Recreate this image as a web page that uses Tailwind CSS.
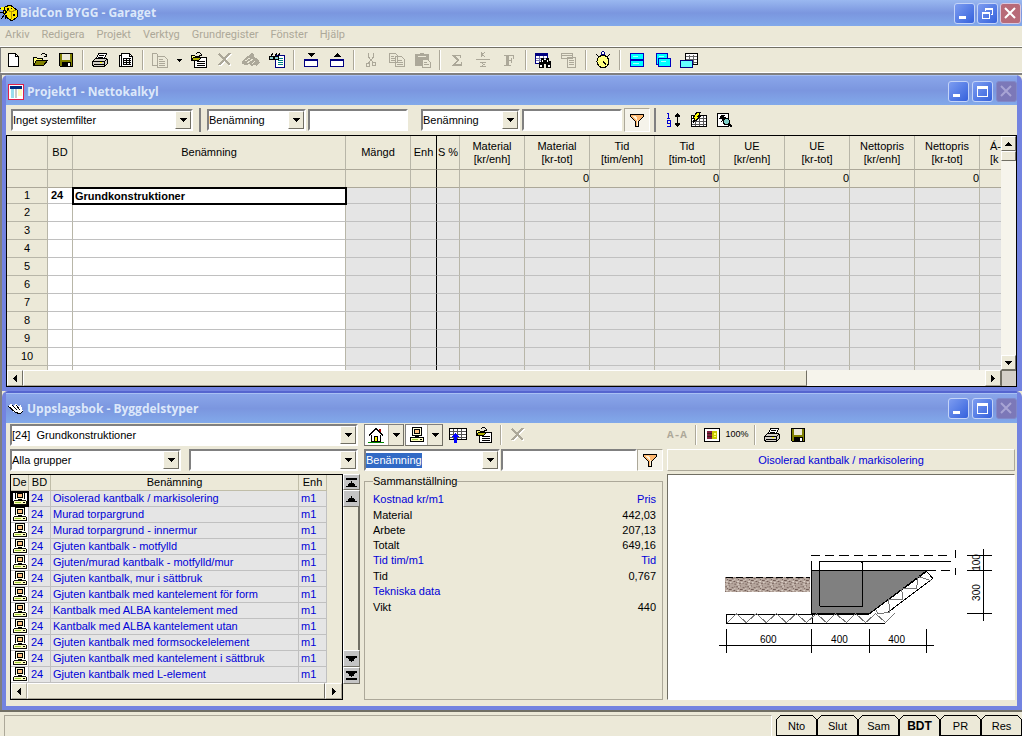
<!DOCTYPE html>
<html lang="sv">
<head>
    <meta charset="UTF-8">
    <meta name="viewport" content="width=device-width, initial-scale=1.0">
    <title>BidCon BYGG - Garaget</title>
    <script src="https://cdn.jsdelivr.net/npm/@tailwindcss/browser@4"></script>
</head>
<body class="bg-[#ece9d8] font-['Liberation_Sans',Arial,sans-serif] text-[11px] text-black [shape-rendering:crispEdges]">

    <!-- icon sprite -->
    <svg class="hidden">
        <symbol id="down" viewBox="0 0 7 4"><path d="M0 0h7v1H6v1H5v1H4v1H3V3H2V2H1V1H0z"/></symbol>
        <symbol id="up" viewBox="0 0 7 4"><path d="M0 4h7V3H6V2H5V1H4V0H3v1H2v1H1v1H0z"/></symbol>
        <symbol id="left" viewBox="0 0 4 7"><path d="M4 0v7H3V6H2V5H1V4H0V3h1V2h1V1h1V0z"/></symbol>
        <symbol id="right" viewBox="0 0 4 7"><path d="M0 0v7h1V6h1V5h1V4h1V3H3V2H2V1H1V0z"/></symbol>
        <symbol id="new" viewBox="0 0 16 16"><path d="M2.500 1.500h7l3 3v10h-10z" fill="#fff" stroke="#000"/><path d="M9.500 1.500v3h3" fill="none" stroke="#000"/></symbol>
        <symbol id="open" viewBox="0 0 16 16"><path d="M1.500 13.500v-8h3l1 1h5v2" fill="#ffff80" stroke="#000"/><path d="M1.500 13.500l3-5h11l-4 5z" fill="#808000" stroke="#000"/><path d="M9 2.500h1M10 1.500h3M13 2.500h1M14.500 2v3M12 4.500h3" fill="none" stroke="#000"/></symbol>
        <symbol id="save" viewBox="0 0 16 16"><path d="M1.500 1.500h13v13h-12l-1-1z" fill="#808000" stroke="#000"/><path d="M4 2h8v6H4z" fill="#ece9d8"/><path d="M4 10h9v4H4z"/><path d="M10 11h2v3h-2z" fill="#fff"/></symbol>
        <symbol id="print" viewBox="0 0 16 16"><path d="M4.500 6.500l2-5h8l-2 5" fill="#fff" stroke="#000"/><path d="M7 3.500h5M6 5.500h5" stroke="#000"/><path d="M.5 9.500l3-3h10l2 1v4l-3 3h-10l-2-1z" fill="#d4d0c8" stroke="#000"/><path d="M1 9.500h11v4M12 9.500l3-2M2 12.500h10" fill="none" stroke="#000"/><path d="M8 10h2v1H8z" fill="#ff0"/></symbol>
        <symbol id="sheet" viewBox="0 0 16 16"><path d="M1.500 3.500h10v11h-10z" fill="#fff" stroke="#000"/><path d="M3.500 1.500h8l3 3v10h-11z" fill="#fff" stroke="#000"/><path d="M11.500 1.500v3h3M5 6.500h8M5 8.500h8M5 10.500h8M5 12.500h8M5.500 6v7M8.500 6v7M11.500 6v7" fill="none" stroke="#000"/></symbol>
        <symbol id="docs" viewBox="0 0 16 16"><path d="M6 13.500H.5v-12h4l1 1v2M5.500 4.500h7l3 3v8h-10z" fill="#ece9d8" stroke="#aca899"/><path d="M7 7.500h4M7 9.500h6M7 11.500h6M7 13.500h6" stroke="#aca899"/></symbol>
        <symbol id="folderdoc" viewBox="0 0 16 16"><path d="M3.500 5.500h12v10h-12z" fill="#fff" stroke="#000"/><path d="M6 9.500h8M6 11.500h8M6 13.500h8" stroke="#000"/><path d="M.5 8.500v-5h3l1 1h4v2" fill="#ffff80" stroke="#000"/><path d="M.5 8.500l2-3h8l-3 3z" fill="#b0b000" stroke="#000"/><path d="M5 1.500h1M6 .5h3M9 1.500h1M10.500 2v2M8 3.500h3" fill="none" stroke="#000"/></symbol>
        <symbol id="del" viewBox="0 0 16 16"><path d="M3 3l11 11M14 2L3 14" stroke="#fff" stroke-width="2"/><path d="M2 2l11 11M13 1L2 13" stroke="#aca899" stroke-width="2"/></symbol>
        <symbol id="hand" viewBox="0 0 18 16"><path d="M0 9l6-5 3-3 3 1v3l4 2 2 4-2 1-1 2-3-1-2 1-3-2-3 1-4-1z" fill="#aca899"/><path d="M3 9l5-3M5 11l6-4M10 12l3-3" stroke="#ece9d8"/></symbol>
        <symbol id="finddoc" viewBox="0 0 16 16"><path d="M6.500 3.500h9v12h-9z" fill="#fff" stroke="#000080"/><path d="M9 6.500h5M9 8.500h5M9 10.500h5M9 12.500h5" stroke="#008080"/><path d="M1.500 7.500v-2l2-4M5.500 7.500v-2l2-4M8.500 7.500v-2l2-4" fill="none" stroke="#000"/><circle cx="2.500" cy="6" r="2" fill="#8cc" stroke="#000"/><circle cx="7.500" cy="6" r="2" fill="#8cc" stroke="#000"/></symbol>
        <symbol id="boxdown" viewBox="0 0 16 16"><path d="M5 1h7v1h-1v1h-1v1H9v1H8V4H7V3H6V2H5z"/><path d="M1.500 7.500h13v7h-13z" fill="#fff" stroke="#000080"/><path d="M1 7h14v2H1z" fill="#000080"/></symbol>
        <symbol id="boxup" viewBox="0 0 16 16"><path d="M8 1h1v1h1v1h1v1h1v1H5V4h1V3h1V2h1z"/><path d="M1.500 7.500h13v7h-13z" fill="#fff" stroke="#000080"/><path d="M1 7h14v2H1z" fill="#000080"/></symbol>
        <symbol id="cut" viewBox="0 0 16 16"><path d="M5.500 1v4l5 6M10.500 1v4l-5 6" fill="none" stroke="#aca899"/><path d="M3.500 11.500h3v3h-3zM9.500 10.500h3v3h-3z" fill="none" stroke="#aca899"/></symbol>
        <symbol id="copy" viewBox="0 0 16 16"><path d="M.5 1.500h6l2 2v7h-8zM6.500 4.500h6l3 3v7h-9z" fill="#ece9d8" stroke="#aca899"/><path d="M2 4.500h3M2 6.500h4M2 8.500h4M8 8.500h5M8 10.500h6M8 12.500h6" stroke="#aca899"/></symbol>
        <symbol id="paste" viewBox="0 0 16 16"><path d="M0 2h5V1h4v1h5v12H0z" fill="#aca899"/><path d="M3 4.500h8" stroke="#ece9d8"/><path d="M7.500 7.500h5l3 3v5h-8z" fill="#ece9d8" stroke="#aca899"/><path d="M9 10.500h3M9 12.500h5" stroke="#aca899"/></symbol>
        <symbol id="sigma" viewBox="0 0 16 16"><path d="M3 3h9v3h-1V4H6l4 4-4 4h6v-2h1v4H3v-1l5-5-5-4z" fill="#aca899"/></symbol>
        <symbol id="ksigma" viewBox="0 0 16 16"><path d="M6.500 0v5M10 0L7 2.500 10 5M1 7.500h14M11 10.500H6l3 2-3 2h5" fill="none" stroke="#aca899"/></symbol>
        <symbol id="bold" viewBox="0 0 16 16"><path d="M3 3h10v4h-1V5l-1-1H8v4h2V6h1v5h-1V9H8v4h2v1H3v-1h2V4H3z" fill="#aca899"/></symbol>
        <symbol id="findtab" viewBox="0 0 16 16"><path d="M.5 1.500h12v10H.5z" fill="#fff" stroke="#000080"/><path d="M0 1h13v3H0z" fill="#000080"/><path d="M1 6.500h11M1 8.500h11M4.500 4v7M8.500 4v7" stroke="#7777b0"/><path d="M6 6h3v2h2V6h3v3h2v7h-5v-4H9v4H4v-6h2z"/><path d="M5 13h2v2H5zM13 13h2v2h-2zM7 8h1v2H7zM12 8h1v2h-1z" fill="#fff"/></symbol>
        <symbol id="tabdoc" viewBox="0 0 16 16"><path d="M.5 1.500h11v5H.5zM6.500 5.500h8v10h-8z" fill="#ece9d8" stroke="#aca899"/><path d="M1 3.500h10M8 8.500h5M8 10.500h5M8 12.500h5" stroke="#aca899"/></symbol>
        <symbol id="clock" viewBox="0 0 16 18"><circle cx="8" cy="10.500" r="6" fill="#ffff80" stroke="#000"/><path d="M8 10.500l3 3M1 3l3 3M15 3l-3 3" stroke="#000"/><path d="M6.500 3.500v-2l1-1h1l1 1v2z" fill="#fff" stroke="#000080"/></symbol>
        <symbol id="tile" viewBox="0 0 16 16"><path d="M1.500 1.500h13v13h-13z" fill="#0ff" stroke="#0000c0"/><path d="M1 8h14" stroke="#0000c0" stroke-width="2"/><path d="M4 4.500h5M4 11.500h6" stroke="#aff"/></symbol>
        <symbol id="cascade" viewBox="0 0 16 16"><path d="M1.500 1.500h11v11h-11z" fill="#0ff" stroke="#0000c0"/><path d="M3.500 6.500h12v8h-12z" fill="#0ff" stroke="#0000c0"/><path d="M4 4.500h5M6 9.500h5" stroke="#aff"/></symbol>
        <symbol id="tabwin" viewBox="0 0 18 16"><path d="M5.500 1.500h12v11h-12z" fill="#fff" stroke="#000"/><path d="M6 4.500h11M6 7.500h11M6 10.500h11M9.500 3v9M13.500 3v9" stroke="#666"/><path d="M.5 8.500h12v7H.5z" fill="#6ff" stroke="#000080"/></symbol>
        <symbol id="filter" viewBox="0 0 16 16"><path d="M1.500 2.500h13v2l-5 5v5h-3v-5l-5-5z" fill="#ffb870" stroke="#000"/><path d="M3 4h4l2 5v5H8V9z" fill="#fff3d8"/></symbol>
        <symbol id="sort" viewBox="0 0 16 16"><path d="M2 1.500h2M3.500 1v6M2 6.500h3M2.500 9v3M5.500 9v6M2 8.500h4M2 11.500h4M2 14.500h3" fill="none" stroke="#0000d0"/><path d="M12 1h1v1h1v1h1v2h-2v6h2v2h-1v1h-1v1h-1v-1h-1v-1h-1v-2h2V5h-2V3h1V2h1z"/></symbol>
        <symbol id="flashtab" viewBox="0 0 18 16"><path d="M1.500 3.500h15v11h-15z" fill="#fff" stroke="#000"/><path d="M2 6.500h14M2 9.500h14M2 12.500h14M5.500 4v10M9.500 4v10M13.500 4v10" stroke="#555"/><path d="M7 0h4L8 4h3l-8 7 2-5H3z" fill="#ff0" stroke="#000"/></symbol>
        <symbol id="preview" viewBox="0 0 16 16"><path d="M.5 1.500h11v13H.5z" fill="#fff" stroke="#000"/><path d="M4 3h4L7 5h2l-5 6 1-4H2z"/><circle cx="9.500" cy="9.500" r="3" fill="#7fd0c8" stroke="#000"/><path d="M12 12l3 3" stroke="#000" stroke-width="2"/></symbol>
        <symbol id="house" viewBox="0 0 16 16"><path d="M3 8h10v6H3z" fill="#fff"/><path d="M11 2h2v4h-2z" fill="#a00"/><path d="M1 8.500L8 2l7 6.500M3.500 8v6.500h9V8" fill="none" stroke="#000" stroke-width="1.500"/><path d="M6.500 9.500h3v5h-3z" fill="#ff0" stroke="#000"/><path d="M0 15.500h16" stroke="#080"/></symbol>
        <symbol id="pc" viewBox="0 0 16 16"><path d="M3 0h10v9H3z"/><path d="M4 1h8v7H4z" fill="#ffd"/><path d="M5 2h6v5H5z"/><path d="M6 3h4v3H6z" fill="#ffc080"/><path d="M6 9h4v2H6z"/><path d="M1.500 10.500h13v4h-13z" fill="#ffffc0" stroke="#000"/><path d="M3 12h6v1H3z" fill="#9c3"/><path d="M11 12h2v1h-2z"/></symbol>
        <symbol id="tabup" viewBox="0 0 18 16"><path d="M.5 1.500h17v11H.5z" fill="#fff" stroke="#000"/><path d="M1 4.500h16M1 7.500h16M1 10.500h16M4.500 2v10M8.500 2v10M12.500 2v10" stroke="#555"/><path d="M6 6h1v1h1v1h1v1h1v1H8v6H5v-6H3V9h1V8h1V7h1z" fill="#00f"/></symbol>
        <symbol id="picture" viewBox="0 0 16 16"><path d="M.5 1.500h15v13H.5z" fill="#fff" stroke="#000"/><path d="M3 4h5v8H3z" fill="#802040"/><path d="M3 6.500h5M3 9.500h5" stroke="#402020"/><path d="M8 4h5v8H8z" fill="#c8c800"/><path d="M10 6h2v2h-2zM10 9h2v1h-2z" fill="#ff6"/></symbol>
        <symbol id="app" viewBox="0 0 18 18"><path d="M5 3l5-2 7 5v7l-5 4-6-4-3-5z" fill="#ffe800" stroke="#000"/><path d="M7 5l4 3 5-2M11 8v7" fill="none" stroke="#b89800"/><path d="M7 4h2v2H7zM11 4h1v1h-1zM13 10h2v2h-2z"/><path d="M0 4h4l2 5M0 8l6 2M1 15l7-9M5 15l2-4" stroke="#000" fill="none"/><path d="M1 3h3v3H1z" fill="#ff0"/></symbol>
        <symbol id="book" viewBox="0 0 16 14"><path d="M0 4l3-2 2 2 3-2 2 2 3-1 2 6-3 3-8-3z" fill="#fff"/><path d="M0 4l7 6 5 2 3-3M4 3l5 5M8 3l4 5" stroke="#000" fill="none"/></symbol>
        <symbol id="calc" viewBox="0 0 16 16"><path d="M.5.5h15v15H.5z" fill="#fff" stroke="#e0204a"/><path d="M2 2h12v3H2z" fill="#002a80"/><path d="M3 5h3v9H3z" fill="#9de"/><path d="M7 5h2v9H7z" fill="#c8c8c8"/><path d="M10 5h4v7h-4z" fill="#fffbc0"/></symbol>
        <symbol id="min" viewBox="0 0 19 19"><path d="M4 12h7v3H4z" fill="#fff"/></symbol>
        <symbol id="max" viewBox="0 0 19 19"><path d="M4 4h11v11H4zM5 7v7h9V7z" fill="#fff" fill-rule="evenodd"/></symbol>
        <symbol id="restore" viewBox="0 0 19 19"><path d="M7 4h8v7h-2v-1h1V6H8v1H7zM4 8h8v7H4zM5 10v4h6v-4z" fill="#fff" fill-rule="evenodd"/></symbol>
        <symbol id="close" viewBox="0 0 19 19"><path d="M4 4l10 10M14 4L4 14" stroke="currentColor" stroke-width="2" shape-rendering="auto"/></symbol>
    </svg>

    <div class="flex min-h-screen flex-col">

        <!-- main title bar -->
        <header class="flex h-[26px] shrink-0 items-center gap-0.5 bg-linear-to-b from-[#9ab8f0] via-[#7b96df] to-[#82a9ea] pr-px">
            <svg class="size-[18px]"><use href="#app"/></svg>
            <h1 class="flex-1 font-['Open_Sans',sans-serif] text-[12px] font-bold text-[#dce8fa]">BidCon BYGG - Garaget</h1>
            <div class="flex gap-0.5" data-buttons="restore"></div>
        </header>

        <nav class="flex h-[21px] shrink-0 items-center gap-3 border-b border-white pb-px pl-[5px] font-[Roboto,sans-serif] text-[#aca899]">
            <a href="#">Arkiv</a><a href="#">Redigera</a><a href="#">Projekt</a><a href="#">Verktyg</a><a href="#">Grundregister</a><a href="#">Fönster</a><a href="#">Hjälp</a>
        </nav>

        <div id="toolbar" class="flex h-[26px] shrink-0 items-center border-b border-l border-t border-b-white border-l-[#808080] border-t-[#716f64]"></div>

        <main class="flex flex-1 flex-col border-l-2 border-t-2 border-[#808080]">

            <!-- calculation window -->
            <section class="flex flex-col rounded-t-md border-b-4 border-l-4 border-r-5 border-[#7383e0] bg-[#ece9d8]">
                <div class="flex h-[30px] items-center gap-0.5 border-t border-[#a8c0f4] bg-linear-to-b from-[#8aa6ea] via-[#7b96df] to-[#82a9ea] pl-0.5 pt-0.5">
                    <svg class="size-4"><use href="#calc"/></svg>
                    <h2 class="flex-1 pl-px font-['Open_Sans',sans-serif] text-[12px] font-bold text-[#dce8fa]">Projekt1 - Nettokalkyl</h2>
                    <div class="flex gap-[3px]" data-buttons="max"></div>
                </div>
                <div class="flex h-[30px] items-center pl-[5px]">
                    <div class="w-[182px]" data-select="Inget systemfilter"></div>
                    <div class="ml-1.5 mr-1.5 h-6 w-0.5 bg-[#808080]"></div>
                    <div class="w-[99px]" data-select="Benämning"></div>
                    <input aria-label="Filtertext 1" class="ml-0.5 h-[22px] w-[100px] border-2 border-b-white border-l-[#808080] border-r-white border-t-[#808080] bg-white px-0.5">
                    <div class="ml-[13px] w-[99px]" data-select="Benämning"></div>
                    <input aria-label="Filtertext 2" class="ml-0.5 h-[22px] w-[100px] border-2 border-b-white border-l-[#808080] border-r-white border-t-[#808080] bg-white px-0.5">
                    <button aria-label="Filter" class="ml-0.5 flex h-6 w-[26px] items-center justify-center border border-b-white border-l-[#aca899] border-r-white border-t-[#aca899] bg-[#f5f3ea]"><svg class="size-4"><use href="#filter"/></svg></button>
                    <div class="ml-1 h-6 w-0.5 bg-[#808080]"></div>
                    <button aria-label="Sortera" class="ml-1 flex w-[26px] justify-center"><svg class="size-4"><use href="#sort"/></svg></button>
                    <button aria-label="Uppdatera" class="flex w-[26px] justify-center"><svg class="h-4 w-[18px]"><use href="#flashtab"/></svg></button>
                    <button aria-label="Förhandsgranska" class="flex w-[26px] justify-center"><svg class="size-4"><use href="#preview"/></svg></button>
                </div>

                <div class="flex flex-col border border-black">
                    <div class="flex">
                        <div class="h-[234px] w-0 flex-1 overflow-hidden">
                            <table class="w-[1038px] table-fixed border-separate border-spacing-0">
                                <colgroup>
                                    <col class="w-[41px]"><col class="w-[25px]"><col class="w-[273px]"><col class="w-[65px]"><col class="w-[26px]"><col class="w-[23px]">
                                    <col class="w-[65px]"><col class="w-[65px]"><col class="w-[65px]"><col class="w-[65px]"><col class="w-[65px]"><col class="w-[65px]"><col class="w-[65px]"><col class="w-[65px]"><col class="w-[65px]">
                                </colgroup>
                                <thead id="calcHead"></thead>
                                <tbody id="calcBody"></tbody>
                            </table>
                        </div>
                        <div class="flex w-[15px] flex-col bg-[#f6f4ec]">
                            <button aria-label="Upp" class="flex h-[15px] items-center justify-center border border-b-[#716f64] border-l-white border-r-[#716f64] border-t-white bg-[#ece9d8]"><svg class="h-1 w-[7px]"><use href="#up"/></svg></button>
                            <div class="h-2.5 border border-b-[#716f64] border-l-white border-r-[#716f64] border-t-white bg-[#ece9d8]"></div>
                            <button aria-label="Ner" class="mt-auto flex h-[15px] items-center justify-center border border-b-[#716f64] border-l-white border-r-[#716f64] border-t-white bg-[#ece9d8]"><svg class="h-1 w-[7px]"><use href="#down"/></svg></button>
                        </div>
                    </div>
                    <div class="flex h-4 bg-[#f6f4ec]">
                        <button aria-label="Vänster" class="flex w-4 items-center justify-center border border-b-[#aca899] border-l-white border-r-[#716f64] border-t-white bg-[#ece9d8]"><svg class="h-[7px] w-1"><use href="#left"/></svg></button>
                        <div class="w-4/5 shrink grow-0 basis-[784px] border border-b-[#aca899] border-l-white border-r-[#716f64] border-t-white bg-[#ece9d8]"></div>
                        <div class="flex-1"></div>
                        <button aria-label="Höger" class="flex w-4 items-center justify-center border border-b-[#aca899] border-l-white border-r-[#716f64] border-t-white bg-[#ece9d8]"><svg class="h-[7px] w-1"><use href="#right"/></svg></button>
                        <div class="w-[15px] border-l border-t border-[#716f64] bg-[#d4d0c8]"></div>
                    </div>
                </div>
            </section>

            <!-- reference book window -->
            <section class="flex flex-1 flex-col rounded-t-md border-b-4 border-l-4 border-r-5 border-t-2 border-[#7383e0] border-t-[#5565cf] bg-[#ece9d8]">
                <div class="flex h-[30px] items-center gap-0.5 border-t border-[#a8c0f4] bg-linear-to-b from-[#8aa6ea] via-[#7b96df] to-[#82a9ea] pl-0.5">
                    <svg class="h-3.5 w-4"><use href="#book"/></svg>
                    <h2 class="flex-1 pl-px font-['Open_Sans',sans-serif] text-[12px] font-bold text-[#dce8fa]">Uppslagsbok - Byggdelstyper</h2>
                    <div class="flex gap-[3px]" data-buttons="max"></div>
                </div>

                <div class="grid flex-1 grid-cols-[350px_299px_1fr] gap-1 pb-1.5 pl-1 pr-0.5 pt-px">

                    <!-- list -->
                    <div class="flex flex-col gap-[3px]">
                        <div class="mr-0.5" data-select="[24]  Grundkonstruktioner"></div>
                        <div class="mr-0.5 flex gap-2">
                            <div class="w-[171px]" data-select="Alla grupper"></div>
                            <div class="flex-1" data-select=""></div>
                        </div>
                        <div class="flex flex-1">
                            <div class="flex w-[333px] flex-col border border-black">
                                <table class="mr-[15px] table-fixed border-separate border-spacing-0">
                                    <colgroup><col class="w-[18px]"><col class="w-[22px]"><col class="w-[248px]"><col class="w-[28px]"></colgroup>
                                    <thead>
                                        <tr class="h-4 leading-[15px]">
                                            <th class="border-b border-r border-[#c0bda8] p-0 font-normal">De</th>
                                            <th class="border-b border-r border-[#c0bda8] p-0 font-normal">BD</th>
                                            <th class="border-b border-r border-[#c0bda8] p-0 font-normal">Benämning</th>
                                            <th class="border-b border-r border-[#c0bda8] p-0 font-normal">Enh</th>
                                        </tr>
                                    </thead>
                                    <tbody id="typeBody"></tbody>
                                </table>
                                <div class="mt-auto flex h-4">
                                    <button aria-label="Vänster" class="flex w-4 items-center justify-center border border-b-[#aca899] border-l-white border-r-[#aca899] border-t-white"><svg class="h-[7px] w-1"><use href="#left"/></svg></button>
                                    <div class="flex-1 border border-b-[#aca899] border-l-white border-r-[#716f64] border-t-white"></div>
                                    <button aria-label="Höger" class="flex w-[17px] items-center justify-center border border-b-[#aca899] border-l-white border-r-[#aca899] border-t-white"><svg class="h-[7px] w-1"><use href="#right"/></svg></button>
                                </div>
                            </div>
                            <div class="mb-4 flex flex-1 flex-col">
                                <button aria-label="Först" class="flex h-4 flex-col items-center justify-center gap-px border border-b-[#716f64] border-l-white border-r-[#716f64] border-t-white bg-[#c4c4c4]"><span class="h-0.5 w-[11px] bg-black"></span><svg class="h-1.5 w-[11px]"><use href="#up"/></svg></button>
                                <button aria-label="Upp" class="flex h-[17px] items-center justify-center border border-b-[#716f64] border-l-white border-r-[#716f64] border-t-white bg-[#c4c4c4]"><svg class="h-1.5 w-[11px]"><use href="#up"/></svg></button>
                                <div class="flex-1 border-l border-r-2 border-l-white border-r-[#716f64]"></div>
                                <button aria-label="Ner" class="flex h-[17px] items-center justify-center border border-b-[#716f64] border-l-white border-r-[#716f64] border-t-white bg-[#c4c4c4]"><svg class="h-1.5 w-[11px]"><use href="#down"/></svg></button>
                                <button aria-label="Sist" class="flex h-[17px] flex-col items-center justify-center gap-px border border-b-[#716f64] border-l-white border-r-[#716f64] border-t-white bg-[#c4c4c4]"><svg class="h-1.5 w-[11px]"><use href="#down"/></svg><span class="h-0.5 w-[11px] bg-black"></span></button>
                            </div>
                        </div>
                    </div>

                    <!-- summary -->
                    <div class="flex flex-col gap-[3px]">
                        <div class="flex h-[22px] items-center">
                            <button aria-label="Hus" class="flex h-[22px] w-10 items-center justify-between border border-b-[#716f64] border-l-[#808080] border-r-[#716f64] border-t-[#808080] bg-white pl-[3px]"><svg class="size-4"><use href="#house"/></svg><span class="flex h-full w-[15px] items-center justify-center border-l border-[#aca899] bg-[#ece9d8]"><svg class="h-1 w-[7px]"><use href="#down"/></svg></span></button>
                            <button aria-label="Källa" class="ml-px flex h-[22px] w-[38px] items-center justify-between border border-b-[#716f64] border-l-[#808080] border-r-[#716f64] border-t-[#808080] bg-white pl-[3px]"><svg class="size-4"><use href="#pc"/></svg><span class="flex h-full w-[15px] items-center justify-center border-l border-[#aca899] bg-[#ece9d8]"><svg class="h-1 w-[7px]"><use href="#down"/></svg></span></button>
                            <button aria-label="Infoga" class="ml-0.5 flex w-[26px] justify-center"><svg class="h-4 w-[18px]"><use href="#tabup"/></svg></button>
                            <button aria-label="Öppna" class="flex w-[26px] justify-center"><svg class="size-4"><use href="#folderdoc"/></svg></button>
                            <div class="mx-[3px] h-5 w-0.5 border-l border-r border-l-[#aca899] border-r-white"></div>
                            <button aria-label="Ta bort" class="flex w-[26px] justify-center"><svg class="size-4"><use href="#del"/></svg></button>
                        </div>
                        <div class="flex h-[22px] items-center">
                            <div class="w-[136px]" data-select="Benämning" data-marked="1"></div>
                            <input aria-label="Sök" class="ml-px h-[22px] w-0 flex-1 border-2 border-b-white border-l-[#808080] border-r-white border-t-[#808080] bg-white px-0.5">
                            <button aria-label="Filter" class="flex h-[22px] w-[26px] items-center justify-center border border-b-white border-l-[#aca899] border-r-white border-t-[#aca899] bg-[#f5f3ea]"><svg class="size-4"><use href="#filter"/></svg></button>
                        </div>
                        <fieldset class="flex-1 border border-[#aca899] pl-2 pr-1.5">
                            <legend class="leading-[14px]">Sammanställning</legend>
                            <dl id="summary" class="pt-1"></dl>
                        </fieldset>
                    </div>

                    <!-- drawing -->
                    <div class="flex flex-col gap-[3px]">
                        <div class="flex h-[22px] items-center">
                            <button class="w-5 font-['Liberation_Mono',monospace] font-bold text-[#aca899]">A-A</button>
                            <div class="ml-2 mr-[7px] h-5 w-0.5 border-l border-r border-l-[#aca899] border-r-white"></div>
                            <button aria-label="Bild" class="flex w-4 justify-center"><svg class="size-4"><use href="#picture"/></svg></button>
                            <button class="w-[34px] text-center text-[9px]">100%</button>
                            <div class="h-5 w-0.5 border-l border-r border-l-[#aca899] border-r-white"></div>
                            <button aria-label="Skriv ut" class="ml-[3px] flex w-[26px] justify-center"><svg class="size-4"><use href="#print"/></svg></button>
                            <button aria-label="Spara" class="flex w-[26px] justify-center"><svg class="size-4"><use href="#save"/></svg></button>
                        </div>
                        <h3 class="h-[22px] border border-b-[#aca899] border-l-white border-r-[#aca899] border-t-white text-center leading-5 text-[#0000d8]">Oisolerad kantbalk / markisolering</h3>
                        <div class="flex-1 border border-b-white border-l-[#716f64] border-r-white border-t-[#716f64] bg-white">
                            <svg viewBox="669 475 345 223" class="h-full w-full" fill="none" stroke="#000">
                                <defs>
                                    <pattern id="soil" width="11" height="9" patternUnits="userSpaceOnUse">
                                        <path d="M0 0h11v9H0z" fill="#b5a59c" stroke="none"/>
                                        <path d="M0 1h2M4 0h1M6 2h2M9 1h1M2 3h1M4 4h2M8 5h2M0 6h1M3 7h2M6 7h1M9 8h2" stroke="#6e5a54"/>
                                        <path d="M2 1h2M7 4h1M1 5h2M5 6h1M9 3h1M1 8h2" stroke="#e0d5cc"/>
                                    </pattern>
                                </defs>
                                <path d="M726 577h85v14h-85z" fill="url(#soil)" stroke="none"/>
                                <path d="M727 577.500h84" stroke-dasharray="7 3"/>
                                <path d="M812.500 570.500h114l-56 42h-58z" fill="#808080"/>
                                <path d="M812.500 570V555.500M812 555.500h140" stroke-dasharray="9 5"/>
                                <path d="M927 570.500h27" stroke-dasharray="9 5"/>
                                <path d="M955.500 550v8M955.500 568v7M820.500 605.500v-44h131M820.500 605.500h42v-44M861 562h2v2"/>
                                <path d="M727.500 622.500v-9h142M727 622.500h158M813.500 613v9"/>
                                <path d="M728 622l9-9 10 9 10-9 10 9 10-9 10 9 10-9 10 9 10-9 10 9 9-9 11 9 9-9 10 9 10-9 10 9 9-9" stroke="#777"/>
                                <path d="M870 613l57-42 6 7-45 34"/>
                                <path d="M876 609l2 4 12-1-1-13 14 0-1-11 15 0 1-12 13 4" stroke="#777"/>
                                <path d="M720 644.500h214M727.500 628v24M812.500 628v24M869.500 628v24M926.500 628v24"/>
                                <path d="M983.500 549v71M967 555.500h25M967 570.500h25M967 612.500h25"/>
                                <g fill="#000" stroke="none" text-anchor="middle" font-size="10">
                                    <text x="769" y="642">600</text>
                                    <text x="840" y="642">400</text>
                                    <text x="897" y="642">400</text>
                                    <text transform="translate(980 562) rotate(-90)">100</text>
                                    <text transform="translate(980 592) rotate(-90)">300</text>
                                </g>
                            </svg>
                        </div>
                    </div>
                </div>
            </section>
        </main>

        <!-- status bar -->
        <footer class="flex h-[27px] shrink-0 items-end border-t-2 border-[#716f64] pl-1">
            <div class="mr-1 h-[22px] flex-1 border border-b-white border-l-[#aca899] border-r-white border-t-[#aca899]"></div>
            <div id="tabs" class="flex"></div>
        </footer>
    </div>

    <script>
    const icon = (name, size) => `<svg class="${size || 'size-4'}"><use href="#${name}"/></svg>`;

    // window buttons
    document.querySelectorAll('[data-buttons]').forEach(el => {
        const kind = el.dataset.buttons;
        const blue = 'size-[21px] rounded-[3px] border border-[#c4d4f8] bg-linear-to-br from-[#7d9cf0] to-[#3560dc]';
        const close = kind === 'restore'
            ? 'size-[21px] rounded-[3px] border border-[#d8c8e0] bg-[#b86a78] text-white'
            : 'size-[21px] rounded-[3px] border border-[#8088c8] bg-[#7c78b8] text-[#a8a4d4]';
        el.innerHTML = `
            <button aria-label="Minimera" class="${blue}">${icon('min', 'size-[19px]')}</button>
            <button aria-label="Maximera" class="${blue}">${icon(kind, 'size-[19px]')}</button>
            <button aria-label="Stäng" class="${close}">${icon('close', 'size-[19px]')}</button>`;
    });

    // combo boxes
    document.querySelectorAll('[data-select]').forEach(el => {
        const text = el.dataset.select;
        const marked = el.dataset.marked ? 'flex-none w-[56px] h-[15px] bg-[#316ac5] text-white' : 'flex-1';
        el.innerHTML = `
            <div class="flex h-[22px] items-center justify-between border-2 border-b-white border-l-[#808080] border-r-white border-t-[#808080] bg-white">
                <select aria-label="${text || 'Urval'}" class="min-w-0 appearance-none whitespace-pre leading-[14px] outline-none ${marked}"><option>${text.replace(/  /g, '&nbsp; ')}</option></select>
                <span class="flex h-full w-4 items-center justify-center border border-b-[#716f64] border-l-white border-r-[#716f64] border-t-white bg-[#ece9d8]">${icon('down', 'h-1 w-[7px]')}</span>
            </div>`;
    });

    // toolbar
    const tools = ['new', 'open', 'save', '|', 'print', 'sheet', '|', 'docs', 'v', 'folderdoc', 'del', 'hand', 'finddoc', '|',
        'boxdown', 'boxup', '|', 'cut', 'copy', 'paste', '|', 'sigma', 'ksigma', 'bold', '|', 'findtab', 'tabdoc', '|', 'clock', '|',
        'tile', 'cascade', 'tabwin'];
    const wide = { hand: 'h-4 w-[18px]', tabwin: 'h-4 w-[18px]', clock: 'h-[18px] w-4' };
    document.getElementById('toolbar').innerHTML = tools.map(t => {
        if (t === '|') return '<div class="mx-[3px] h-5 w-0.5 border-l border-r border-l-[#aca899] border-r-white"></div>';
        if (t === 'v') return `<button aria-label="Fler" class="flex w-[13px] justify-center">${icon('down', 'h-[3px] w-[5px]')}</button>`;
        return `<button aria-label="${t}" class="flex w-[26px] justify-center">${icon(t, wide[t])}</button>`;
    }).join('');

    // calculation grid
    const cols = ['', 'BD', 'Benämning', 'Mängd', 'Enh', 'S %', 'Material<br>[kr/enh]', 'Material<br>[kr-tot]', 'Tid<br>[tim/enh]', 'Tid<br>[tim-tot]',
        'UE<br>[kr/enh]', 'UE<br>[kr-tot]', 'Nettopris<br>[kr/enh]', 'Nettopris<br>[kr-tot]', 'Á-<br>[k'];
    const line = i => i === 4 ? 'border-r border-r-black' : 'border-r border-r-[#b8b6a8]';
    const align = i => i === 14 ? 'text-left pl-2.5' : 'text-center';
    document.getElementById('calcHead').innerHTML =
        '<tr class="h-[34px]">' + cols.map((c, i) => `<th class="whitespace-nowrap border-b border-b-[#aca899] p-0 font-normal leading-[13px] ${align(i)} ${line(i)}">${c}</th>`).join('') + '</tr>' +
        '<tr class="h-[18px]">' + cols.map((c, i) => `<td class="border-b border-b-[#aca899] p-0 text-right leading-[17px] ${line(i)}">${[7, 9, 11, 13].includes(i) ? '0' : ''}</td>`).join('') + '</tr>';

    let rows = '';
    for (let r = 1; r <= 11; r++) {
        rows += `<tr class="${r === 1 ? 'h-4' : 'h-[18px]'}">` + cols.map((c, i) => {
            if (i === 0) return `<th class="border-b border-b-[#b8b6a8] p-0 font-normal leading-[15px] ${line(i)}">${r <= 10 ? r : ''}</th>`;
            const bg = i < 3 ? 'bg-white' : 'bg-[#e5e5e5]';
            if (r === 1 && i === 1) return `<td class="border-b border-b-[#c0c0c0] p-0 pl-[3px] font-bold leading-[15px] ${bg} ${line(i)}">24</td>`;
            if (r === 1 && i === 2) return `<td class="bg-white p-0 pl-0.5 font-bold leading-3 outline-2 -outline-offset-1 outline-black">Grundkonstruktioner</td>`;
            return `<td class="border-b border-b-[#c0c0c0] p-0 ${bg} ${line(i)}"></td>`;
        }).join('') + '</tr>';
    }
    document.getElementById('calcBody').innerHTML = rows;

    // building part types
    const types = ['Oisolerad kantbalk / markisolering', 'Murad torpargrund', 'Murad torpargrund - innermur', 'Gjuten kantbalk - motfylld',
        'Gjuten/murad kantbalk - motfylld/mur', 'Gjuten kantbalk, mur i sättbruk', 'Gjuten kantbalk med kantelement för form',
        'Kantbalk med ALBA kantelement med', 'Kantbalk med ALBA kantelement utan', 'Gjuten kantbalk med formsockelelement',
        'Gjuten kantbalk med kantelement i sättbruk', 'Gjuten kantbalk med L-element'];
    document.getElementById('typeBody').innerHTML = types.map((t, i) => `
        <tr class="h-4 bg-[#e5e5e5] leading-[15px] text-[#0000d8]">
            <td class="border-b border-r border-[#c0c0c0] bg-white p-0 ${i === 0 ? 'outline-2 -outline-offset-2 outline-black' : ''}">${icon('pc', 'mx-auto block h-[15px] w-4')}</td>
            <td class="border-b border-r border-[#c0c0c0] p-0 pl-0.5">24</td>
            <td class="whitespace-nowrap border-b border-r border-[#c0c0c0] p-0 pl-0.5">${t}</td>
            <td class="border-b border-r border-[#c0c0c0] p-0 pl-0.5">m1</td>
        </tr>`).join('');

    // summary
    const summary = [['Kostnad kr/m1', 'Pris', 1], ['Material', '442,03'], ['Arbete', '207,13'], ['Totalt', '649,16'],
        ['Tid tim/m1', 'Tid', 1], ['Tid', '0,767'], ['Tekniska data', '', 1], ['Vikt', '440']];
    document.getElementById('summary').innerHTML = summary.map(([k, v, head]) =>
        `<div class="flex justify-between leading-[15px] ${head ? 'h-4 text-[#0000d8]' : 'h-[15px]'}"><dt>${k}</dt><dd>${v}</dd></div>`).join('');

    // view tabs
    document.getElementById('tabs').innerHTML = ['Nto', 'Slut', 'Sam', 'BDT', 'PR', 'Res'].map(t => {
        const on = t === 'BDT';
        return `<button class="grid h-[22px] w-[41px] ${on ? 'text-[12px] font-bold' : ''}">
            <svg class="col-start-1 row-start-1" viewBox="0 0 41 22" fill="none" stroke="#000"><path d="M.5 22V4.500l4-4h32l4 4V22${on ? '' : 'M0 20.500h41'}"/></svg>
            <span class="col-start-1 row-start-1 self-center">${t}</span></button>`;
    }).join('');
    </script>
</body>
</html>
